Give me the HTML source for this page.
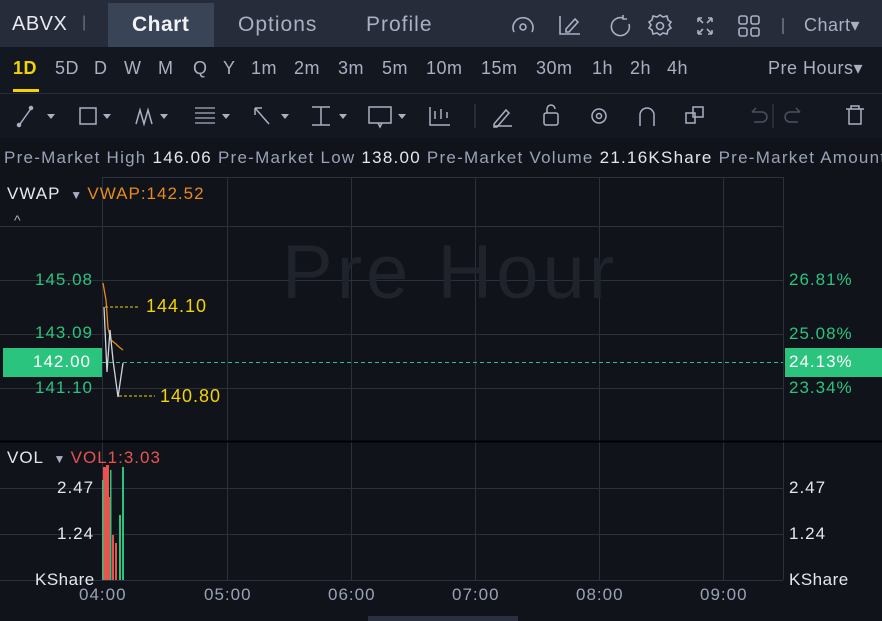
<!DOCTYPE html><html><head><style>
body{margin:0;width:882px;height:621px;background:#10131a;font-family:"Liberation Sans",sans-serif;overflow:hidden;position:relative;color:#c8cdd8;letter-spacing:1px}
.a{position:absolute;white-space:nowrap}
</style></head><body>
<div class="a" style="left:0;top:0;width:882px;height:47px;background:#262c3a"></div>
<div class="a" style="left:108px;top:3px;width:106px;height:44px;background:#3a4457"></div>
<div class="a" style="left:12px;top:13px;font-size:20px;color:#e6e9ef;letter-spacing:0.5px">ABVX</div>
<div class="a" style="left:82px;top:14px;font-size:16px;color:#6b7385">|</div>
<div class="a" style="left:132px;top:13px;font-size:21px;font-weight:bold;color:#f0f2f6;letter-spacing:0.5px">Chart</div>
<div class="a" style="left:238px;top:13px;font-size:21px;color:#a9b0c2">Options</div>
<div class="a" style="left:366px;top:13px;font-size:21px;color:#a9b0c2">Profile</div>
<svg class="a" style="left:505px;top:10px" width="360" height="30" fill="none" stroke="#a9b0c2" stroke-width="1.6">
<path d="M9 22a10 10 0 1 1 18 0"/><circle cx="18" cy="17" r="3"/>
<path d="M55 6v18h20M61 19l9-10 3 3-9 10h-3z"/>
<path d="M118 8a9 9 0 1 0 6 6M118 5v4h4"/>
<circle cx="155" cy="16" r="3.5"/><path d="M155 5l3 2 4-1 1 4 3 2-2 3 2 3-3 2-1 4-4-1-3 2-3-2-4 1-1-4-3-2 2-3-2-3 3-2 1-4 4 1z"/>
<path d="M193 8l5 5M193 8h4M193 8v4M207 8l-5 5M207 8h-4M207 8v4M193 24l5-5M193 24h4M193 24v-4M207 24l-5-5M207 24h-4M207 24v-4"/>
<rect x="234" y="6" width="8" height="8" rx="2"/><rect x="246" y="6" width="8" height="8" rx="2"/><rect x="234" y="18" width="8" height="8" rx="2"/><rect x="246" y="18" width="8" height="8" rx="2"/>
<path d="M278 8v16" stroke="#6b7385"/>
</svg>
<div class="a" style="left:804px;top:15px;font-size:18px;color:#a9b0c2;letter-spacing:0.5px">Chart▾</div>
<div class="a" style="left:0;top:47px;width:882px;height:46px;background:#131720"></div>
<div class="a" style="left:0;top:58px;font-size:18px;color:#a9b0c2;letter-spacing:0.5px">
<span style="position:absolute;left:13px;color:#f2d400;font-weight:bold">1D</span><span style="position:absolute;left:55px">5D</span><span style="position:absolute;left:94px">D</span><span style="position:absolute;left:124px">W</span><span style="position:absolute;left:158px">M</span><span style="position:absolute;left:193px">Q</span><span style="position:absolute;left:223px">Y</span><span style="position:absolute;left:251px">1m</span><span style="position:absolute;left:294px">2m</span><span style="position:absolute;left:338px">3m</span><span style="position:absolute;left:382px">5m</span><span style="position:absolute;left:426px">10m</span><span style="position:absolute;left:481px">15m</span><span style="position:absolute;left:536px">30m</span><span style="position:absolute;left:592px">1h</span><span style="position:absolute;left:630px">2h</span><span style="position:absolute;left:667px">4h</span><span style="position:absolute;left:768px">Pre Hours▾</span></div>
<div class="a" style="left:13px;top:89px;width:26px;height:3px;background:#f2d400"></div>
<div class="a" style="left:0;top:93px;width:882px;height:1px;background:#262c38"></div>
<div class="a" style="left:0;top:94px;width:882px;height:44px;background:#131720"></div>
<svg class="a" style="left:0;top:94px" width="882" height="44" fill="none" stroke="#a9b0c2" stroke-width="1.5">
<path d="M20 30l10-14"/><circle cx="19" cy="31" r="1.5" fill="#a9b0c2"/><circle cx="31" cy="14" r="1.5" fill="#a9b0c2"/>
<rect x="80" y="14" width="16" height="16"/>
<path d="M136 30l4-14 4 14 4-14 4 14"/>
<path d="M195 14h20M195 19h20M195 24h20M195 29h20" stroke-width="1.2"/>
<path d="M255 14l14 16M255 14h7M255 14v7"/>
<path d="M312 13h18M312 31h18M321 13v18"/>
<rect x="369" y="13" width="22" height="16"/><path d="M378 29l2 4 2-4"/>
<path d="M430 13v18h20M435 17v8M441 15v10M447 18v6"/>
<path d="M475 10v24M773 10v24" stroke="#2e3442"/>
<path d="M494 30l12-14 3 3-12 14h-3zM494 32h18"/>
<rect x="544" y="19" width="14" height="12" rx="2"/><path d="M547 19v-4a4 4 0 0 1 8 0"/>
<circle cx="599" cy="22" r="7"/><circle cx="599" cy="22" r="2.5"/>
<path d="M640 32v-11a7 7 0 0 1 14 0v11"/>
<rect x="686" y="19" width="9" height="10"/><rect x="693" y="13" width="10" height="10"/>
<path d="M752 18h10a5 5 0 0 1 0 10h-8M752 18l4-4" stroke="#4a5060"/>
<path d="M800 18h-10a5 5 0 0 0 0 10h8M800 18l-4-4" stroke="#4a5060"/>
<path d="M846 15h18M851 15v-3h8v3M849 15v15h12v-15"/>
<path d="M47 20l4 5 4-5zM103 20l4 5 4-5zM160 20l4 5 4-5zM222 20l4 5 4-5zM281 20l4 5 4-5zM339 20l4 5 4-5zM398 20l4 5 4-5z" fill="#a9b0c2" stroke="none"/>
</svg>
<div class="a" style="left:4px;top:148px;font-size:17px;color:#9aa2b8;letter-spacing:1.25px">Pre-Market High <span style="color:#e4e7ee">146.06</span> Pre-Market Low <span style="color:#e4e7ee">138.00</span> Pre-Market Volume <span style="color:#e4e7ee">21.16KShare</span> Pre-Market Amount</div>
<svg class="a" style="left:0;top:0" width="882" height="621">
<g stroke="#2a303c" stroke-width="1">
<path d="M102 177.5H783M0 226.5H783M0 280.5H783M0 334.5H783M0 388.5H783M0 488.5H783M0 534.5H783M0 580.5H783"/>
<path d="M102.5 177V580M227.5 177V580M351.5 177V580M475.5 177V580M599.5 177V580M723.5 177V580M783.5 177V580"/>
</g>
<path d="M0 441.5H882" stroke="#000" stroke-width="2"/>
<text x="282" y="298" font-size="76" fill="#1f232c" font-family="Liberation Sans" letter-spacing="4">Pre Hour</text>
<path d="M102 362.5H783" stroke="#2bc47e" stroke-dasharray="4 3"/>
<path d="M105 307H139M119 396H155" stroke="#f2d400" stroke-dasharray="3 2"/>
<path d="M103 283L106 300L108 328L111 340L116 344L119 347L123 350" stroke="#e88a1a" fill="none" stroke-width="1.3"/>
<path d="M104 307L107 372L110 330L113 360L118 397L123 363" stroke="#d0d4dc" fill="none" stroke-width="1.3"/>
<g fill="#e8534f"><rect x="103" y="467" width="3" height="113"/><rect x="106" y="465" width="3" height="115"/><rect x="109" y="497" width="2" height="83"/><rect x="112" y="535" width="2" height="45"/><rect x="115" y="543" width="2" height="37"/></g>
<g fill="#2bc47e"><rect x="102" y="480" width="1.5" height="100"/><rect x="110" y="470" width="1.5" height="110"/><rect x="119" y="515" width="2" height="65"/><rect x="122" y="467" width="2" height="113"/></g>
</svg>
<div class="a" style="left:7px;top:184px;font-size:17px;color:#e4e7ee">VWAP <span style="color:#a9b0c2;font-size:12px">&nbsp;▼&nbsp;</span><span style="color:#e88a1a">VWAP:142.52</span></div>
<div class="a" style="left:14px;top:212px;font-size:14px;color:#a9b0c2">^</div>
<div class="a" style="left:35px;top:270px;font-size:17px;color:#2bc47e">145.08</div>
<div class="a" style="left:35px;top:323px;font-size:17px;color:#2bc47e">143.09</div>
<div class="a" style="left:3px;top:348px;width:99px;height:29px;background:#2bc47e"></div>
<div class="a" style="left:33px;top:352px;font-size:17px;color:#fff">142.00</div>
<div class="a" style="left:35px;top:378px;font-size:17px;color:#2bc47e">141.10</div>
<div class="a" style="left:146px;top:296px;font-size:18px;color:#f2d400">144.10</div>
<div class="a" style="left:160px;top:386px;font-size:18px;color:#f2d400">140.80</div>
<div class="a" style="left:789px;top:270px;font-size:17px;color:#2bc47e">26.81%</div>
<div class="a" style="left:789px;top:324px;font-size:17px;color:#2bc47e">25.08%</div>
<div class="a" style="left:785px;top:348px;width:97px;height:29px;background:#2bc47e"></div>
<div class="a" style="left:789px;top:352px;font-size:17px;color:#fff">24.13%</div>
<div class="a" style="left:789px;top:378px;font-size:17px;color:#2bc47e">23.34%</div>
<div class="a" style="left:7px;top:448px;font-size:17px;color:#e4e7ee">VOL <span style="color:#a9b0c2;font-size:12px">&nbsp;▼&nbsp;</span><span style="color:#e8534f">VOL1:3.03</span></div>
<div class="a" style="left:57px;top:478px;font-size:17px;color:#e4e7ee">2.47</div>
<div class="a" style="left:57px;top:524px;font-size:17px;color:#e4e7ee">1.24</div>
<div class="a" style="left:35px;top:570px;font-size:17px;color:#e4e7ee;letter-spacing:0.5px">KShare</div>
<div class="a" style="left:789px;top:478px;font-size:17px;color:#e4e7ee">2.47</div>
<div class="a" style="left:789px;top:524px;font-size:17px;color:#e4e7ee">1.24</div>
<div class="a" style="left:789px;top:570px;font-size:17px;color:#e4e7ee;letter-spacing:0.5px">KShare</div>
<div class="a" style="left:79px;top:585px;font-size:17px;color:#9aa2b8">04:00</div>
<div class="a" style="left:204px;top:585px;font-size:17px;color:#9aa2b8">05:00</div>
<div class="a" style="left:328px;top:585px;font-size:17px;color:#9aa2b8">06:00</div>
<div class="a" style="left:452px;top:585px;font-size:17px;color:#9aa2b8">07:00</div>
<div class="a" style="left:576px;top:585px;font-size:17px;color:#9aa2b8">08:00</div>
<div class="a" style="left:700px;top:585px;font-size:17px;color:#9aa2b8">09:00</div>
<div class="a" style="left:368px;top:616px;width:150px;height:5px;background:#2a3040"></div>
</body></html>
